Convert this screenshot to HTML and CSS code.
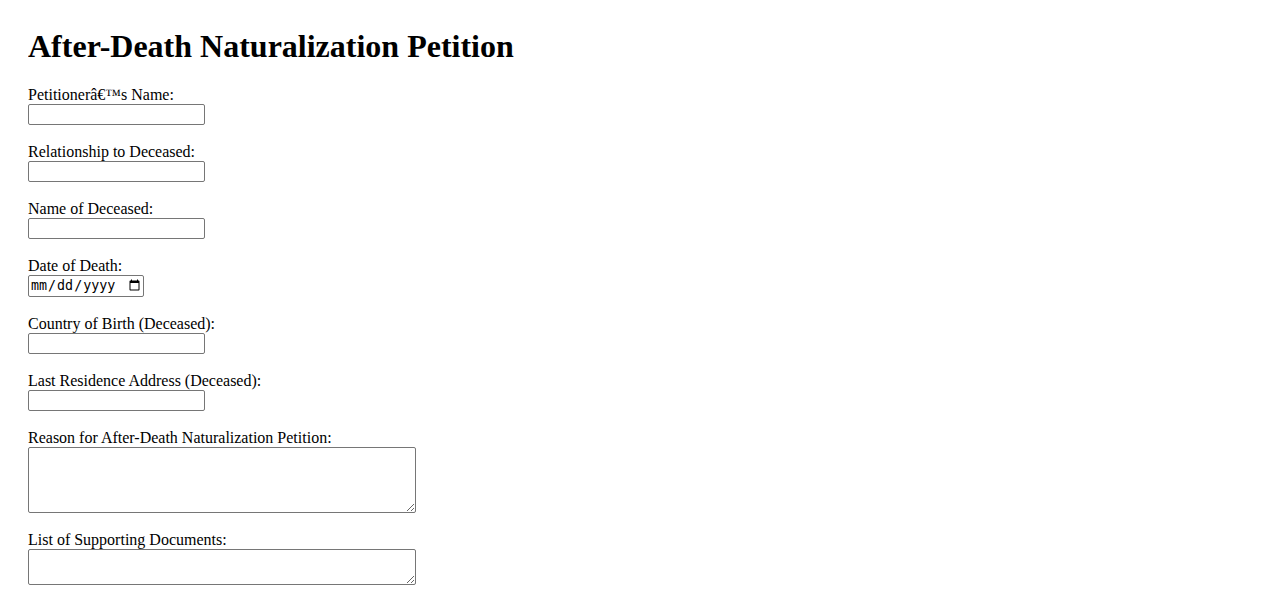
FILE: index.html
```html
<!DOCTYPE html>
<html>
<head>
<meta charset="utf-8">
<title>After-Death Naturalization Petition</title>
<link rel="stylesheet" href="styles.css">
</head>
<body>
<h1 class="title">After-Death Naturalization Petition</h1>
<form class="petition">
<label for="pname">Petitionerâ€™s Name:</label><br>
<input class="field" type="text" id="pname"><br><br>
<label for="rel">Relationship to Deceased:</label><br>
<input class="field" type="text" id="rel"><br><br>
<label for="dname">Name of Deceased:</label><br>
<input class="field" type="text" id="dname"><br><br>
<label for="dod">Date of Death:</label><br>
<input class="date" type="date" id="dod"><br><br>
<label for="cob">Country of Birth (Deceased):</label><br>
<input class="field" type="text" id="cob"><br><br>
<label for="addr">Last Residence Address (Deceased):</label><br>
<input class="field" type="text" id="addr"><br><br>
<label for="reason">Reason for After-Death Naturalization Petition:</label><br>
<textarea class="area" id="reason" rows="4" cols="50"></textarea><br><br>
<label for="docs">List of Supporting Documents:</label><br>
<textarea class="area" id="docs" rows="2" cols="50"></textarea><br><br>
<input type="submit" value="Submit Petition">
</form>
</body>
</html>
```
FILE: styles.css
```css
body {
  margin: 28px;
  font-family: "Liberation Serif", "Times New Roman", serif;
  background: #fff;
  color: #000;
}
.title {
  font-size: 32px;
  margin: 0 0 21px;
}
.field {
  font-family: "Liberation Sans", Arial, sans-serif;
  width: 177px;
  height: 21px;
  box-sizing: border-box;
  border: 1px solid #767676;
  border-radius: 2px;
}
.date {
  width: 116px;
  height: 22px;
  box-sizing: border-box;
  border: 1px solid #767676;
  border-radius: 2px;
}
.area {
  width: 388px;
  box-sizing: border-box;
  border: 1px solid #767676;
  border-radius: 2px;
  vertical-align: bottom;
}
#reason {
  height: 66px;
}
#docs {
  height: 36px;
}
```
